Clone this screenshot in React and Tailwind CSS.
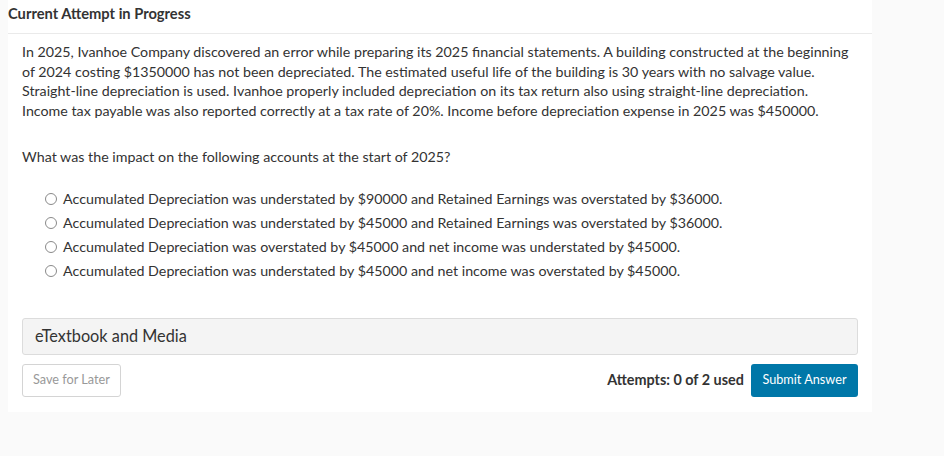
const OPTIONS = [
  "Accumulated Depreciation was understated by $90000 and Retained Earnings was overstated by $36000.",
  "Accumulated Depreciation was understated by $45000 and Retained Earnings was overstated by $36000.",
  "Accumulated Depreciation was overstated by $45000 and net income was understated by $45000.",
  "Accumulated Depreciation was understated by $45000 and net income was overstated by $45000.",
];

export default function App() {
  return (
    <div
      className="min-h-[456px] bg-[#fafafa] pl-2 text-[#333]"
      style={{ fontFamily: "Lato, 'Open Sans', sans-serif" }}
    >
      <div className="w-[864px] bg-white pb-[15px]">
        <div className="flex h-[34px] items-center border-b border-[#eaeaea] pb-[6px] text-[14.7px] font-bold">
          Current Attempt in Progress
        </div>

        <div className="px-[14px] pt-[8px] text-[14.25px] leading-[19.5px]">
          <p className="whitespace-nowrap">
            In 2025, Ivanhoe Company discovered an error while preparing its 2025 financial statements. A building constructed at the beginning
            <br />
            of 2024 costing $1350000 has not been depreciated. The estimated useful life of the building is 30 years with no salvage value.
            <br />
            Straight-line depreciation is used. Ivanhoe properly included depreciation on its tax return also using straight-line depreciation.
            <br />
            Income tax payable was also reported correctly at a tax rate of 20%. Income before depreciation expense in 2025 was $450000.
          </p>
          <p className="mt-[27px]">What was the impact on the following accounts at the start of 2025?</p>

          <div className="mt-[20px] flex flex-col pl-[23px]">
            {OPTIONS.map((opt) => (
              <label key={opt} className="flex h-[24px] items-center">
                <span className="mr-[6px] h-[12px] w-[12px] rounded-full border border-[#8a8a8a] bg-white" />
                <span>{opt}</span>
              </label>
            ))}
          </div>

          <div className="mt-[35px] flex h-[37px] items-center rounded-[3px] border border-[#dcdcdc] bg-[#f4f4f4] pl-[12px] text-[16.3px]">
            eTextbook and Media
          </div>

          <div className="mt-[9px] flex items-center">
            <button
              type="button"
              className="h-[33px] rounded-[3px] border border-[#d4d4d4] bg-white px-[10px] text-[12.7px] text-[#999]"
            >
              Save for Later
            </button>
            <span className="ml-auto mr-[7px] text-[14.4px] font-bold">Attempts: 0 of 2 used</span>
            <button
              type="button"
              className="h-[33px] rounded-[3px] bg-[#0077a8] px-[11.5px] text-[12.7px] text-white"
            >
              Submit Answer
            </button>
          </div>
        </div>
      </div>
    </div>
  );
}
